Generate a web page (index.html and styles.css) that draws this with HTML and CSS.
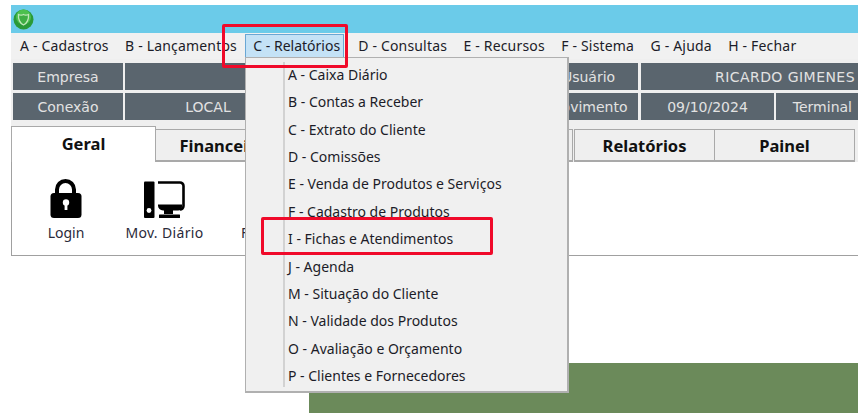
FILE: index.html
```html
<!DOCTYPE html>
<html lang="pt">
<head>
<meta charset="utf-8">
<title>Relatórios</title>
<link rel="stylesheet" href="styles.css">
</head>
<body>
<div class="app">
  <header class="titlebar">
    <svg class="logo" width="21" height="21" viewBox="0 0 21 21"><circle cx="10.500" cy="10.500" r="10" fill="#2a9a38"/><circle cx="10.500" cy="8" r="7.500" fill="#4cc04e"/><path d="M5.500 5.500c2 1 3.500 1 5 0 1.500 1 3 1 5 0 .5 4.500-1.500 9-5 10.500-3.500-1.500-5.500-6-5-10.500z" fill="#3fae44" stroke="#bfe8b8" stroke-width="1.300"/></svg>
  </header>
  <nav class="menubar">
    <span class="menu-item">A - Cadastros</span>
    <span class="menu-item">B - Lançamentos</span>
    <span class="menu-item active">C - Relatórios</span>
    <span class="menu-item">D - Consultas</span>
    <span class="menu-item">E - Recursos</span>
    <span class="menu-item">F - Sistema</span>
    <span class="menu-item">G - Ajuda</span>
    <span class="menu-item">H - Fechar</span>
  </nav>
  <section class="info">
    <div class="info-row">
      <div class="cell c-label">Empresa</div>
      <div class="cell c-value"></div>
      <div class="cell c-label2">Usuário</div>
      <div class="cell c-user">RICARDO GIMENES</div>
    </div>
    <div class="info-row">
      <div class="cell c-label">Conexão</div>
      <div class="cell c-value c-local">LOCAL</div>
      <div class="cell c-label2">Movimento</div>
      <div class="cell c-date">09/10/2024</div>
      <div class="cell c-term">Terminal</div>
    </div>
  </section>
  <div class="tabs">
    <div class="tab tab-on">Geral</div>
    <div class="tab t-fin">Financeiro</div>
    <div class="tab t-gap"></div>
    <div class="tab t-rel">Relatórios</div>
    <div class="tab t-pai">Painel</div>
  </div>
  <section class="panel">
    <div class="tool t-login">
      <svg width="32" height="40" viewBox="0 0 32 40"><path d="M7 16V10.500a8.500 8.500 0 0 1 17 0V16" fill="none" stroke="#000" stroke-width="4"/><rect x="0.500" y="14" width="31" height="25" rx="3.500" fill="#000"/><circle cx="16" cy="23.500" r="3.200" fill="#fff"/><rect x="14.600" y="24" width="2.800" height="7" fill="#fff"/></svg>
      <span>Login</span>
    </div>
    <div class="tool t-mov">
      <svg width="41" height="38" viewBox="0 0 41 38"><rect x="0" y="0.500" width="10.500" height="36.500" rx="1" fill="#000"/><circle cx="5" cy="29.500" r="2.400" fill="#fff"/><path d="M14 1.500h22a3.500 3.500 0 0 1 3.500 3.500v20a3.500 3.500 0 0 1-3.500 3.500" fill="none" stroke="#000" stroke-width="2.600"/><path d="M14 23.500h24v2a4 4 0 0 1-4 4H19a5 5 0 0 1-5-5z" fill="#000"/><rect x="20" y="29" width="9" height="4" fill="#000"/><rect x="15" y="33.500" width="21" height="3.500" rx="0.500" fill="#000"/></svg>
      <span>Mov. Diário</span>
    </div>
    <div class="tool t-f"><span>F</span></div>
  </section>
  <div class="photo"></div>

  <div class="popup">
    <div class="popup-item">A - Caixa Diário</div>
    <div class="popup-item">B - Contas a Receber</div>
    <div class="popup-item">C - Extrato do Cliente</div>
    <div class="popup-item">D - Comissões</div>
    <div class="popup-item">E - Venda de Produtos e Serviços</div>
    <div class="popup-item">F - Cadastro de Produtos</div>
    <div class="popup-item">I - Fichas e Atendimentos</div>
    <div class="popup-item">J - Agenda</div>
    <div class="popup-item">M - Situação do Cliente</div>
    <div class="popup-item">N - Validade dos Produtos</div>
    <div class="popup-item">O - Avaliação e Orçamento</div>
    <div class="popup-item">P - Clientes e Fornecedores</div>
  </div>
  <div class="mark mark-menu"></div>
  <div class="mark mark-item"></div>
</div>
</body>
</html>
```
FILE: styles.css
```css
* { box-sizing: border-box; }
html, body { margin: 0; padding: 0; background: #fff; }
body { width: 858px; height: 420px; overflow: hidden; font-family: "Noto Sans", "Open Sans", sans-serif; font-size: 14px; color: #1c1c28; }
.app { position: relative; width: 858px; height: 420px; padding: 5px 0 0 11px; overflow: hidden; }

.titlebar { height: 28px; background: #6bcbe9; display: flex; align-items: center; padding-left: 2px; }
.logo { display: block; margin-top: 1px; }

.menubar { height: 26px; background: #f1f1f1; display: flex; align-items: center; padding-left: 1px; }
.menu-item { height: 24px; line-height: 24px; padding: 0 8px; margin-right: .4px; white-space: nowrap; letter-spacing: .18px; }
.menu-item.active { background: #c4e2f6; border: 1px solid #6aa7d4; line-height: 22px; padding: 0 3px 0 7px; margin: 0 6px 0 0; letter-spacing: 0; }

.info { background: #efefef; padding: 4px 0 3px 2px; display: flex; flex-direction: column; gap: 3px; height: 67px; }
.info-row { display: flex; gap: 2px; height: 27px; }
.cell { background: #5a656e; color: #e2e2e2; height: 27px; line-height: 28px; text-align: center; white-space: nowrap; font-family: "DejaVu Sans", sans-serif; font-size: 14px; overflow: hidden; }
.c-label { width: 110px; }
.c-value { width: 388px; }
.c-local { padding-right: 222px; }
.c-label2 { width: 123px; padding-left: 24px; margin-right: 1px; }
.c-user { flex: 1; text-align: right; padding-right: 3px; letter-spacing: .45px; }
.c-date { width: 133px; }
.c-term { flex: 1; text-align: right; padding-right: 6px; }

.tabs { display: flex; height: 36px; background: #efefef; padding-left: 1px; align-items: flex-end; }
.tab { height: 33px; border: 1px solid #a9a9a9; border-bottom-width: 2px; background: #efefef; font-weight: 700; font-size: 16.500px; line-height: 31px; text-align: center; color: #111; white-space: nowrap; margin-left: -1px; overflow: hidden; }
.tab-on { height: 36px; width: 145px; background: #fff; border-bottom: 0; line-height: 34px; z-index: 1; }
.t-fin { width: 145px; padding-right: 10px; }
.t-gap { width: 274px; }
.t-rel { width: 141px; margin-left: 1px; }
.t-pai { width: 141px; }

.panel { height: 94px; background: #fff; border-left: 1px solid #a0a0a0; border-bottom: 1px solid #a0a0a0; display: flex; }
.tool { display: flex; flex-direction: column; align-items: center; color: #2a2a3a; white-space: nowrap; }
.tool span { line-height: 18px; }
.t-login { width: 108px; padding-top: 17px; gap: 5px; }
.t-mov { width: 89px; padding-top: 19px; gap: 5px; letter-spacing: .35px; }
.t-f { padding-top: 62px; margin-left: 32px; }

.photo { margin: 107px 0 0 298px; height: 50px; background: #6b8a5a; }

.popup { position: absolute; left: 245px; top: 57px; width: 324px; height: 336px; background: #f0f0f0; border: solid #b0b0b0; border-width: 1px 2px 2px 1px; padding: 3px 0 0 42px; }
.popup::before { content: ""; position: absolute; left: 37px; top: 4px; bottom: 4px; width: 2px; background: #d2d2d2; }
.popup-item { height: 27.360px; line-height: 27.360px; white-space: nowrap; }

.mark { position: absolute; border: 3px solid #f00a2a; border-radius: 2px; }
.mark-menu { left: 222px; top: 24px; width: 126px; height: 44px; }
.mark-item { left: 261px; top: 217px; width: 232px; height: 38px; }
```
